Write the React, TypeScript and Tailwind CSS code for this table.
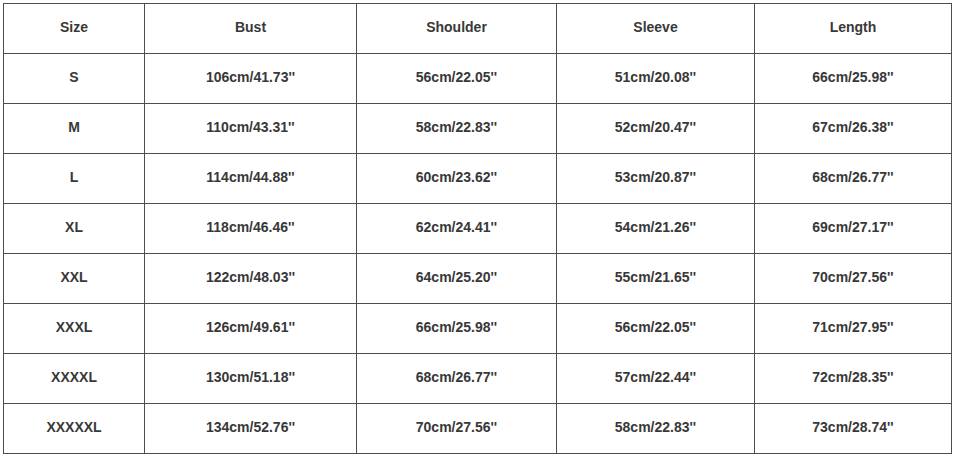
const headers = ["Size", "Bust", "Shoulder", "Sleeve", "Length"];

const rows: string[][] = [
  ["S", "106cm/41.73''", "56cm/22.05''", "51cm/20.08''", "66cm/25.98''"],
  ["M", "110cm/43.31''", "58cm/22.83''", "52cm/20.47''", "67cm/26.38''"],
  ["L", "114cm/44.88''", "60cm/23.62''", "53cm/20.87''", "68cm/26.77''"],
  ["XL", "118cm/46.46''", "62cm/24.41''", "54cm/21.26''", "69cm/27.17''"],
  ["XXL", "122cm/48.03''", "64cm/25.20''", "55cm/21.65''", "70cm/27.56''"],
  ["XXXL", "126cm/49.61''", "66cm/25.98''", "56cm/22.05''", "71cm/27.95''"],
  ["XXXXL", "130cm/51.18''", "68cm/26.77''", "57cm/22.44''", "72cm/28.35''"],
  ["XXXXXL", "134cm/52.76''", "70cm/27.56''", "58cm/22.83''", "73cm/28.74''"],
];

const widths = ["w-[141px]", "w-[212px]", "w-[200px]", "w-[198px]", "w-[197px]"];

export default function App() {
  return (
    <div className="w-[954px] h-[456px] bg-white pt-[3px] pl-[3px] font-['Liberation_Sans',Arial,sans-serif]">
      <table className="border-collapse table-fixed w-[948px] text-[14px] font-bold text-[#383838]">
        <colgroup>
          {widths.map((w, i) => (
            <col key={i} className={w} />
          ))}
        </colgroup>
        <thead>
          <tr className="h-[50px]">
            {headers.map((h) => (
              <th key={h} className="border border-[#4d4d4d] text-center align-middle font-bold p-0 pb-[2px]">
                {h}
              </th>
            ))}
          </tr>
        </thead>
        <tbody>
          {rows.map((r) => (
            <tr key={r[0]} className="h-[50px]">
              {r.map((c, i) => (
                <td key={i} className="border border-[#4d4d4d] text-center align-middle p-0 pb-[2px]">
                  {c}
                </td>
              ))}
            </tr>
          ))}
        </tbody>
      </table>
    </div>
  );
}
